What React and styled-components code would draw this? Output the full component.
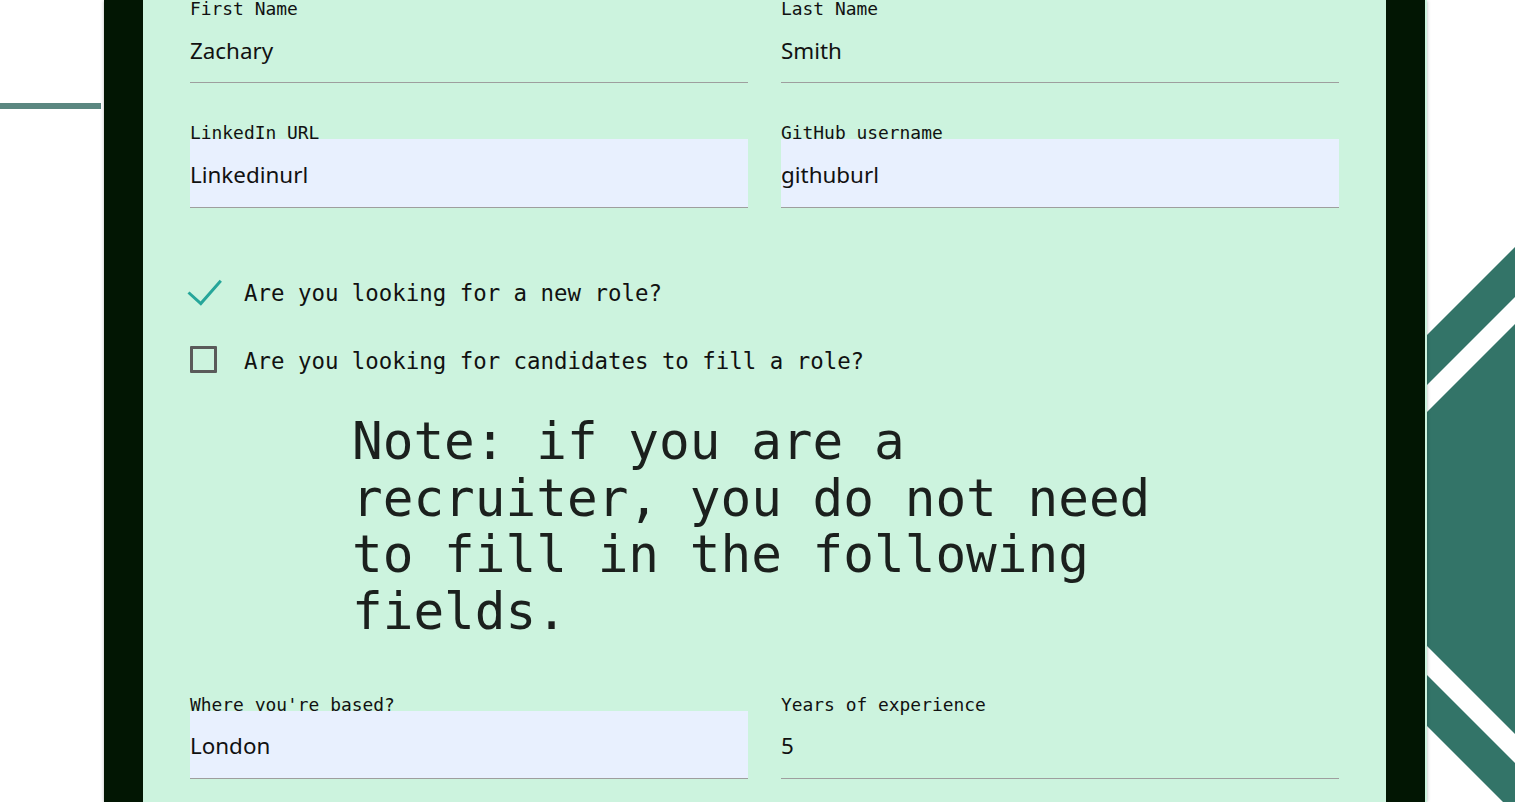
import React from 'react';
import styled, { createGlobalStyle } from 'styled-components';

const mint = '#ccf3de';
const dark = '#021603';
const teal = '#337468';
const mono = '"DejaVu Sans Mono", "Liberation Mono", monospace';

const GlobalStyle = createGlobalStyle`
  html, body {
    margin: 0;
    padding: 0;
    background: #ffffff;
    overflow: hidden;
  }
  * {
    box-sizing: border-box;
  }
`;

const Profile = () => {
  const topFields = [
    { label: 'First Name', value: 'Zachary' },
    { label: 'Last Name', value: 'Smith' },
    { label: 'LinkedIn URL', value: 'Linkedinurl', filled: true },
    { label: 'GitHub username', value: 'githuburl', filled: true },
  ];
  const bottomFields = [
    { label: "Where you're based?", value: 'London', filled: true },
    { label: 'Years of experience', value: '5' },
  ];

  return (
    <S.Page>
      <GlobalStyle />
      {/* background decoration behind the card */}
      <S.Backdrop viewBox="0 0 1515 802" width="1515" height="802">
        <rect x="0" y="103" width="101" height="6" fill="#5b8780" />
        <polygon points="1231.5,530.5 2231.5,-469.5 3231.5,530.5 2231.5,1530.5" fill={teal} />
        <polygon points="1282,530 2282,-470 3282,530 2282,1530" fill="#ffffff" />
        <polygon points="1310,529 2310,-471 3310,529 2310,1529" fill={teal} />
      </S.Backdrop>

      <S.Card>
        <S.Frame>
          <S.Form>
            <S.FieldGrid>
              {topFields.map(f => (
                <S.Field key={f.label}>
                  <S.Label>{f.label}</S.Label>
                  <S.Input filled={f.filled ? 1 : 0} defaultValue={f.value} readOnly />
                </S.Field>
              ))}
            </S.FieldGrid>

            <S.Checks>
              <S.CheckRow>
                <S.Indicator>
                  <S.Tick viewBox="0 0 40 35" width="40" height="35">
                    <polyline
                      points="2.5,16.5 14.8,27.6 34.8,4.8"
                      fill="none"
                      stroke="#26a69a"
                      strokeWidth="3"
                    />
                  </S.Tick>
                </S.Indicator>
                <S.CheckText>Are you looking for a new role?</S.CheckText>
              </S.CheckRow>
              <S.CheckRow>
                <S.Indicator>
                  <S.Box />
                </S.Indicator>
                <S.CheckText>Are you looking for candidates to fill a role?</S.CheckText>
              </S.CheckRow>
            </S.Checks>

            <S.Note>Note: if you are a recruiter, you do not need to fill in the following fields.</S.Note>

            <S.FieldGrid last>
              {bottomFields.map(f => (
                <S.Field key={f.label}>
                  <S.Label>{f.label}</S.Label>
                  <S.Input filled={f.filled ? 1 : 0} defaultValue={f.value} readOnly />
                </S.Field>
              ))}
            </S.FieldGrid>
          </S.Form>
        </S.Frame>
      </S.Card>
    </S.Page>
  );
};

export default Profile;

const S = {
  Page: styled.div`
    position: relative;
    width: 1515px;
    height: 802px;
    overflow: hidden;
    background: #ffffff;
  `,
  Backdrop: styled.svg`
    position: absolute;
    top: 0;
    left: 0;
    z-index: 0;
  `,
  Card: styled.div`
    position: relative;
    z-index: 1;
    margin-left: 104px;
    width: 1323px;
    min-height: 802px;
    padding-right: 2px;
    background: ${mint};
    box-shadow: 0 0 4px 0 rgba(0, 0, 0, 0.22), 0 2px 2px 0 rgba(0, 0, 0, 0.1);
  `,
  Frame: styled.div`
    min-height: 802px;
    border-left: 39px solid ${dark};
    border-right: 39px solid ${dark};
  `,
  Form: styled.div`
    padding: 0 47px;
  `,
  FieldGrid: styled.div`
    display: grid;
    grid-template-columns: 1fr 1fr;
    column-gap: 33px;
    row-gap: 41.3px;
    margin-top: ${p => (p.last ? '55px' : '0')};
  `,
  Field: styled.div`
    display: flex;
    flex-direction: column;
  `,
  Label: styled.label`
    display: block;
    height: 15px;
    line-height: 18px;
    font-family: ${mono};
    font-size: 17.92px;
    color: #111;
    white-space: nowrap;
  `,
  Input: styled.input`
    position: relative;
    display: block;
    width: 100%;
    height: 68.2px;
    margin: 0;
    padding: 3px 0 0;
    border: none;
    border-bottom: 1px solid #9e9e9e;
    border-radius: 0;
    outline: none;
    background: ${p => (p.filled ? '#e8f0fe' : 'transparent')};
    font-family: 'Noto Sans', 'Open Sans', sans-serif;
    font-size: 22.4px;
    color: #111;
  `,
  Checks: styled.div`
    display: flex;
    flex-direction: column;
    gap: 33px;
    margin-top: 68px;
  `,
  CheckRow: styled.div`
    display: flex;
    align-items: flex-start;
    height: 35px;
  `,
  Indicator: styled.div`
    width: 54px;
    height: 35px;
    flex: none;
  `,
  Tick: styled.svg`
    display: block;
    margin-left: -4px;
  `,
  Box: styled.div`
    width: 27px;
    height: 27px;
    margin-top: 2.3px;
    border: 3px solid #5a5a5a;
    border-radius: 1px;
  `,
  CheckText: styled.span`
    font-family: ${mono};
    font-size: 22.4px;
    line-height: 35px;
    color: #111;
    white-space: nowrap;
  `,
  Note: styled.p`
    width: 831px;
    margin: 35.25px auto 0;
    padding-left: 3px;
    font-family: ${mono};
    font-size: 51px;
    line-height: 56.7px;
    color: rgba(0, 0, 0, 0.87);
  `,
};
